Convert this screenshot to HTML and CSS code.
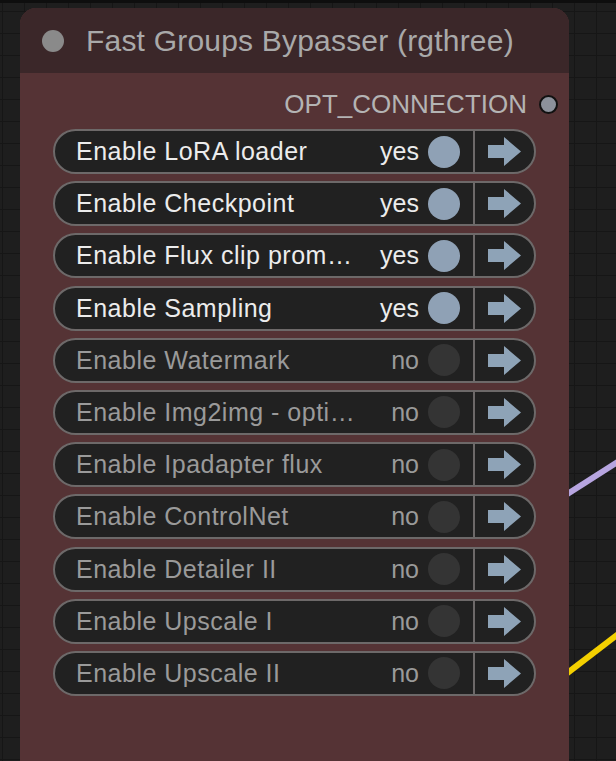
FILE: index.html
```html
<!DOCTYPE html>
<html lang="en">
<head>
    <meta charset="UTF-8">
    <meta name="viewport" content="width=device-width, initial-scale=1.0">
    <title>Fast Groups Bypasser</title>
    <link rel="stylesheet" href="styles.css">
</head>
<body>
    <div class="canvas">
        <!-- links coming out of other nodes, drawn under the node -->
        <svg class="wires" width="616" height="761" viewBox="0 0 616 761">
            <line x1="540" y1="511.5" x2="630" y2="454" stroke="#b7a5e0" stroke-width="6"/>
            <line x1="540" y1="694" x2="630" y2="625" stroke="#f4d000" stroke-width="6"/>
        </svg>

        <div class="node">
            <div class="node-title">
                <span class="collapse-dot"></span>
                <span class="title">Fast Groups Bypasser (rgthree)</span>
            </div>
            <div class="node-body">
                <div class="output">
                    <span>OPT_CONNECTION</span>
                    <span class="slot"></span>
                </div>

                <div class="groups">
                    <div class="group on">
                        <span class="label">Enable LoRA loader</span>
                        <span class="state">yes</span><span class="knob"></span>
                        <span class="go"><svg width="33" height="29" viewBox="0 0 33 29"><path d="M0 8H16V0L33 14.5L16 29V21H0Z"/></svg></span>
                    </div>
                    <div class="group on">
                        <span class="label">Enable Checkpoint</span>
                        <span class="state">yes</span><span class="knob"></span>
                        <span class="go"><svg width="33" height="29" viewBox="0 0 33 29"><path d="M0 8H16V0L33 14.5L16 29V21H0Z"/></svg></span>
                    </div>
                    <div class="group on">
                        <span class="label">Enable Flux clip prom…</span>
                        <span class="state">yes</span><span class="knob"></span>
                        <span class="go"><svg width="33" height="29" viewBox="0 0 33 29"><path d="M0 8H16V0L33 14.5L16 29V21H0Z"/></svg></span>
                    </div>
                    <div class="group on">
                        <span class="label">Enable Sampling</span>
                        <span class="state">yes</span><span class="knob"></span>
                        <span class="go"><svg width="33" height="29" viewBox="0 0 33 29"><path d="M0 8H16V0L33 14.5L16 29V21H0Z"/></svg></span>
                    </div>
                    <div class="group">
                        <span class="label">Enable Watermark</span>
                        <span class="state">no</span><span class="knob"></span>
                        <span class="go"><svg width="33" height="29" viewBox="0 0 33 29"><path d="M0 8H16V0L33 14.5L16 29V21H0Z"/></svg></span>
                    </div>
                    <div class="group">
                        <span class="label">Enable Img2img - opti…</span>
                        <span class="state">no</span><span class="knob"></span>
                        <span class="go"><svg width="33" height="29" viewBox="0 0 33 29"><path d="M0 8H16V0L33 14.5L16 29V21H0Z"/></svg></span>
                    </div>
                    <div class="group">
                        <span class="label">Enable Ipadapter flux</span>
                        <span class="state">no</span><span class="knob"></span>
                        <span class="go"><svg width="33" height="29" viewBox="0 0 33 29"><path d="M0 8H16V0L33 14.5L16 29V21H0Z"/></svg></span>
                    </div>
                    <div class="group">
                        <span class="label">Enable ControlNet</span>
                        <span class="state">no</span><span class="knob"></span>
                        <span class="go"><svg width="33" height="29" viewBox="0 0 33 29"><path d="M0 8H16V0L33 14.5L16 29V21H0Z"/></svg></span>
                    </div>
                    <div class="group">
                        <span class="label">Enable Detailer II</span>
                        <span class="state">no</span><span class="knob"></span>
                        <span class="go"><svg width="33" height="29" viewBox="0 0 33 29"><path d="M0 8H16V0L33 14.5L16 29V21H0Z"/></svg></span>
                    </div>
                    <div class="group">
                        <span class="label">Enable Upscale I</span>
                        <span class="state">no</span><span class="knob"></span>
                        <span class="go"><svg width="33" height="29" viewBox="0 0 33 29"><path d="M0 8H16V0L33 14.5L16 29V21H0Z"/></svg></span>
                    </div>
                    <div class="group">
                        <span class="label">Enable Upscale II</span>
                        <span class="state">no</span><span class="knob"></span>
                        <span class="go"><svg width="33" height="29" viewBox="0 0 33 29"><path d="M0 8H16V0L33 14.5L16 29V21H0Z"/></svg></span>
                    </div>
                </div>
            </div>
        </div>
    </div>
</body>
</html>
```

FILE: styles.css
```css
body { margin: 0; overflow: hidden; font-family: "Liberation Sans", Arial, sans-serif; background: #1d1d1d; }

/* graph canvas with its grid */
.canvas { position: relative; height: 761px; overflow: hidden; box-sizing: border-box; padding: 5px 0 0 20px; border-top: 3px solid #0e0e0e;
    background-color: #1e1e1e;
    background-image: linear-gradient(#161616 1px, transparent 1px), linear-gradient(90deg, #161616 1px, transparent 1px);
    background-size: 22px 22px; background-position: 2px 8px; }
.wires { position: absolute; left: 0; top: -3px; }

.node { position: relative; z-index: 1; width: 549px; height: 100%; background: #553335; border-radius: 16px 16px 0 0; }
.node-title { height: 65px; background: #3b2729; border-radius: 16px 16px 0 0; display: flex; align-items: center; padding-left: 22px; gap: 22px; }
.collapse-dot { width: 22px; height: 22px; border-radius: 50%; background: #8a8a8a; }
.title { font-size: 30px; letter-spacing: 0.2px; color: #a9a9a9; white-space: nowrap; }

.node-body { padding: 0 33px; }
.output { display: flex; justify-content: flex-end; align-items: center; gap: 12px; height: 40px; margin: 11px -22px 5px 0; font-size: 26px; color: #b4b4b4; }
.slot { width: 15px; height: 15px; border: 2px solid #111; border-radius: 50%; background: #8c919b; }

.groups { display: flex; flex-direction: column; gap: 7.2px; }
.group { display: flex; align-items: center; height: 45px; box-sizing: border-box; border: 2px solid #6d6969; border-radius: 23px; background: #212121; overflow: hidden; font-size: 25px; color: #9a9a9a; }
.label { flex: 1; padding-left: 21px; letter-spacing: 0.5px; white-space: nowrap; overflow: hidden; }
.knob { width: 32px; height: 32px; border-radius: 50%; background: #343434; margin: 0 13px 0 9px; }
.go { width: 59px; align-self: stretch; border-left: 2px solid #6d6969; display: flex; align-items: center; justify-content: center; }
.go svg { fill: #8ea3b7; }

.group.on { color: #ececec; }
.group.on .knob { background: #8fa1b5; }
```
